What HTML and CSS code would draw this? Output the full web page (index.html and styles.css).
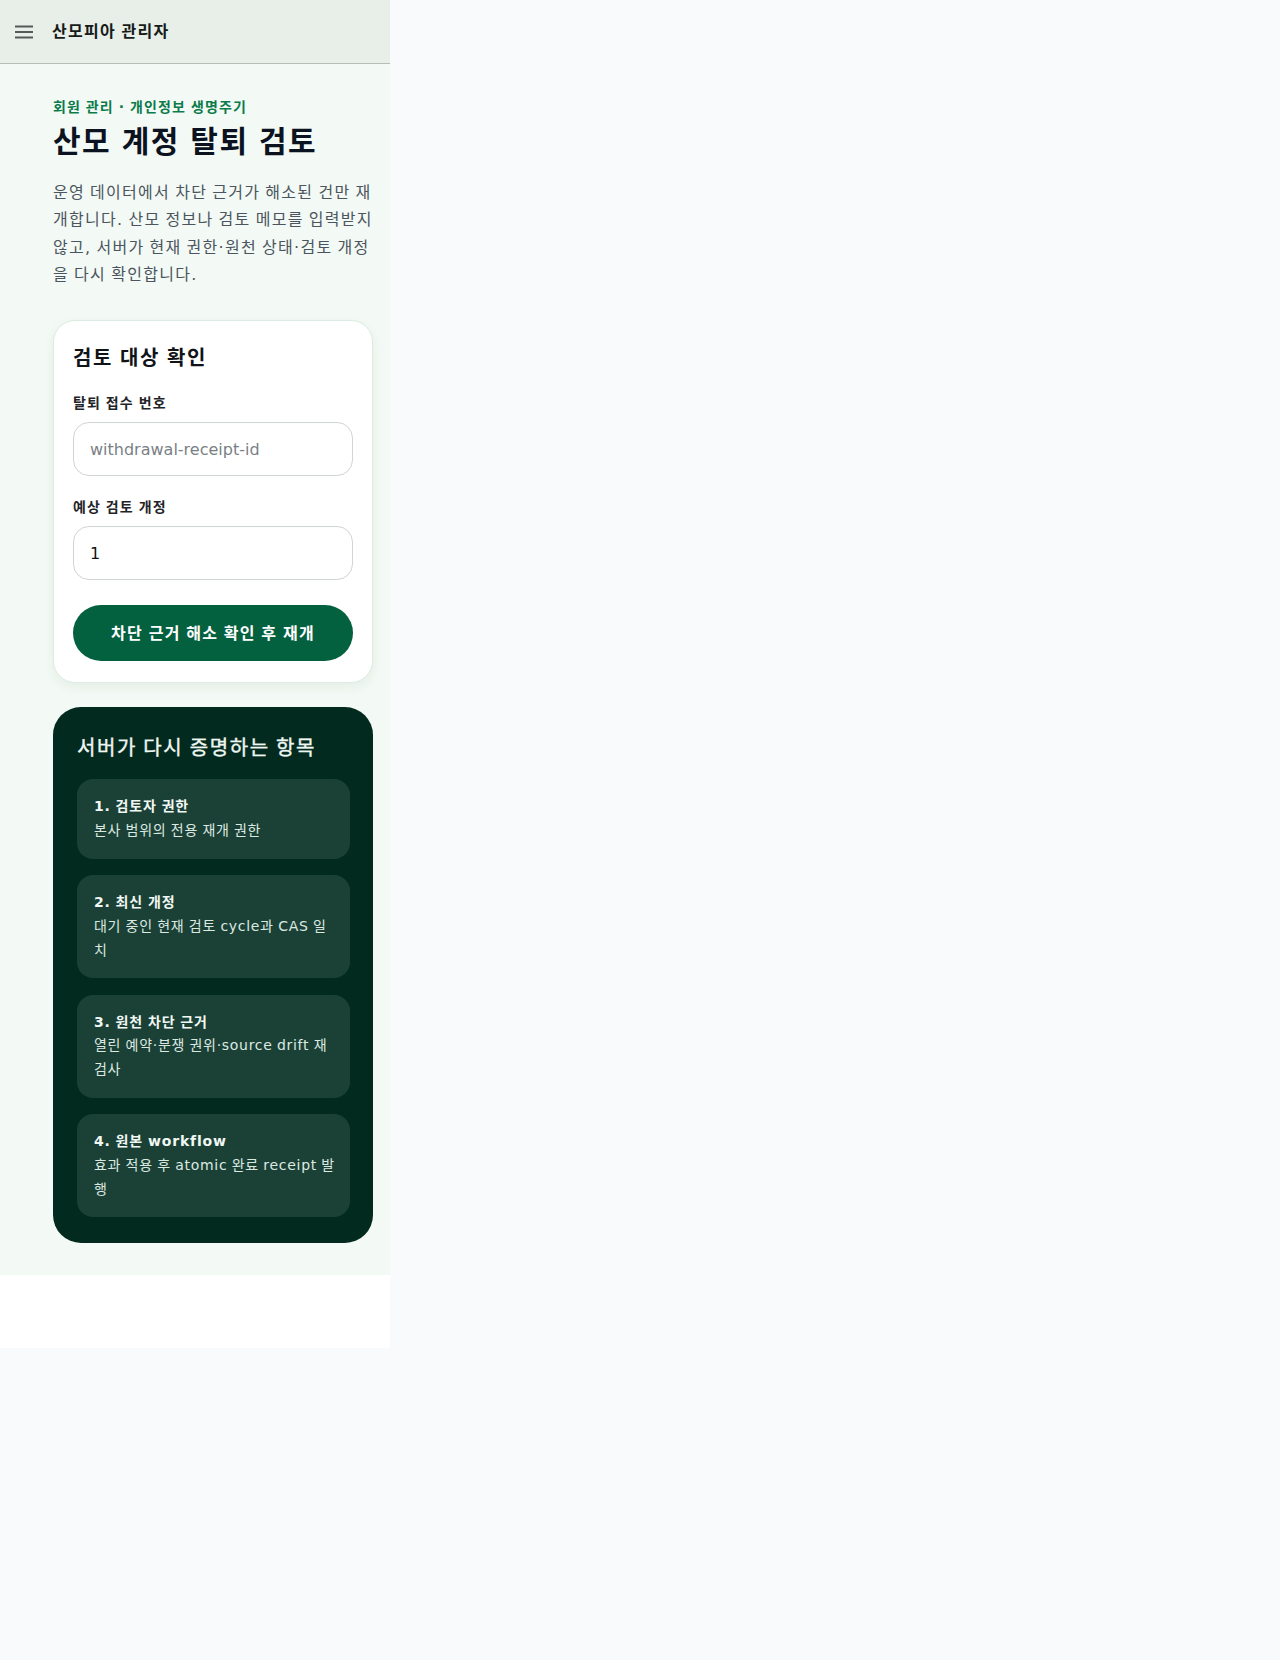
FILE: index.html
```html
<!DOCTYPE html>
<html>
<head>
<meta charset="utf-8">
<title>산모피아 관리자</title>
<link rel="stylesheet" href="styles.css">
</head>
<body>
<div class="app">
  <header class="topbar">
    <span class="menu-btn" aria-label="메뉴">
      <svg width="18" height="14" viewBox="0 0 18 14"><path d="M0 1.5h18M0 7h18M0 12.5h18" stroke="#555a58" stroke-width="2" fill="none"/></svg>
    </span>
    <span class="brand">산모피아 관리자</span>
  </header>
  <main class="main">
    <p class="eyebrow">회원 관리 · 개인정보 생명주기</p>
    <h1 class="title">산모 계정 탈퇴 검토</h1>
    <p class="lead">운영 데이터에서 차단 근거가 해소된 건만 재개합니다. 산모 정보나 검토 메모를 입력받지 않고, 서버가 현재 권한·원천 상태·검토 개정을 다시 확인합니다.</p>

    <section class="card">
      <h2 class="card-title">검토 대상 확인</h2>
      <div class="field">
        <label class="label" for="rid">탈퇴 접수 번호</label>
        <input class="input" id="rid" type="text" placeholder="withdrawal-receipt-id">
      </div>
      <div class="field">
        <label class="label" for="rev">예상 검토 개정</label>
        <input class="input" id="rev" type="text" value="1">
      </div>
      <button class="btn" type="button">차단 근거 해소 확인 후 재개</button>
    </section>

    <section class="proof">
      <h2 class="proof-title">서버가 다시 증명하는 항목</h2>
      <ul class="proof-list">
        <li class="proof-item"><strong>1. 검토자 권한</strong><span>본사 범위의 전용 재개 권한</span></li>
        <li class="proof-item"><strong>2. 최신 개정</strong><span>대기 중인 현재 검토 cycle과 CAS 일치</span></li>
        <li class="proof-item"><strong>3. 원천 차단 근거</strong><span>열린 예약·분쟁 권위·source drift 재검사</span></li>
        <li class="proof-item"><strong>4. 원본 workflow</strong><span>효과 적용 후 atomic 완료 receipt 발행</span></li>
      </ul>
    </section>
  </main>
  <footer class="footer"></footer>
</div>
</body>
</html>
```

FILE: styles.css
```css
* { box-sizing: border-box; }

html, body {
  margin: 0;
  padding: 0;
}

body {
  background: #f8fafb;
  font-family: "DejaVu Sans", "Noto Sans CJK KR", sans-serif;
  font-size: 16px;
  line-height: 1.7;
  color: #111827;
}

/* Hangul is set a little wider; spaces keep their natural width */
.brand, .eyebrow, .lead, .card-title, .label, .btn, .proof-title {
  letter-spacing: 0.08em;
  word-spacing: -0.08em;
}

.app {
  width: 390px;
}

.topbar {
  height: 64px;
  background: #e8eee8;
  border-bottom: 1px solid #b9bdb9;
  display: flex;
  align-items: center;
  padding: 0 0 0 15px;
  gap: 19px;
}

.menu-btn {
  display: flex;
  width: 18px;
  height: 14px;
}

.brand {
  font-size: 16px;
  font-weight: 700;
  color: #161b19;
  line-height: 1;
}

.main {
  background: #f3f9f4;
  padding: 33px 17px 32px 53px;
}

.eyebrow {
  margin: 0 0 7px;
  font-size: 14px;
  line-height: 20px;
  font-weight: 700;
  color: #0b7b4c;
}

.title {
  margin: 0 0 19px;
  font-size: 30px;
  line-height: 36px;
  font-weight: 700;
  letter-spacing: 0.05em;
  word-spacing: -0.05em;
  color: #0b1220;
}

.lead {
  margin: 0 0 32px;
  font-size: 16px;
  line-height: 27.3px;
  color: #4b5560;
}

.card {
  background: #ffffff;
  border: 1px solid #dcece2;
  border-radius: 22px;
  padding: 23px 19px 21px;
  box-shadow: 0 4px 12px rgba(20, 60, 40, 0.06);
}

.card-title {
  margin: 0 0 19px;
  font-size: 20px;
  line-height: 28px;
  font-weight: 700;
  color: #101418;
}

.field {
  display: flex;
  flex-direction: column;
  gap: 7px;
  margin-bottom: 19px;
}

.label {
  font-size: 14px;
  line-height: 24px;
  font-weight: 700;
  color: #1f2428;
}

.input {
  height: 54px;
  width: 100%;
  border: 1px solid #cfd5d2;
  border-radius: 16px;
  padding: 0 16px;
  font: inherit;
  font-size: 16px;
  color: #111;
  background: #fff;
  outline: none;
}

.input::placeholder {
  color: #7a7f85;
}

.btn {
  display: block;
  width: 100%;
  height: 56px;
  margin-top: 25px;
  border: none;
  border-radius: 999px;
  background: #04613f;
  color: #ffffff;
  font: inherit;
  font-size: 16px;
  font-weight: 700;
  cursor: pointer;
}

.proof {
  margin-top: 24px;
  background: #032a1f;
  border-radius: 28px;
  padding: 27px 23px 26px 24px;
  color: #eef7f2;
}

.proof-title {
  margin: 0 0 17px;
  font-size: 20px;
  line-height: 28px;
  font-weight: 400;
  -webkit-text-stroke: 0.4px #eef7f2;
  color: #eef7f2;
}

.proof-list {
  list-style: none;
  margin: 0;
  padding: 0;
  display: flex;
  flex-direction: column;
  gap: 16.5px;
}

.proof-item {
  background: #1b4137;
  border-radius: 16px;
  padding: 16px 14px 16px 17px;
  font-size: 14px;
  line-height: 23.7px;
  display: flex;
  flex-direction: column;
}

.proof-item strong {
  font-weight: 700;
  color: #f1f8f4;
  letter-spacing: 0.06em;
  word-spacing: -0.06em;
}

.proof-item span {
  color: #dbe9e1;
  letter-spacing: 0.05em;
  word-spacing: -0.05em;
}

.footer {
  height: 73px;
  background: #ffffff;
}
```
